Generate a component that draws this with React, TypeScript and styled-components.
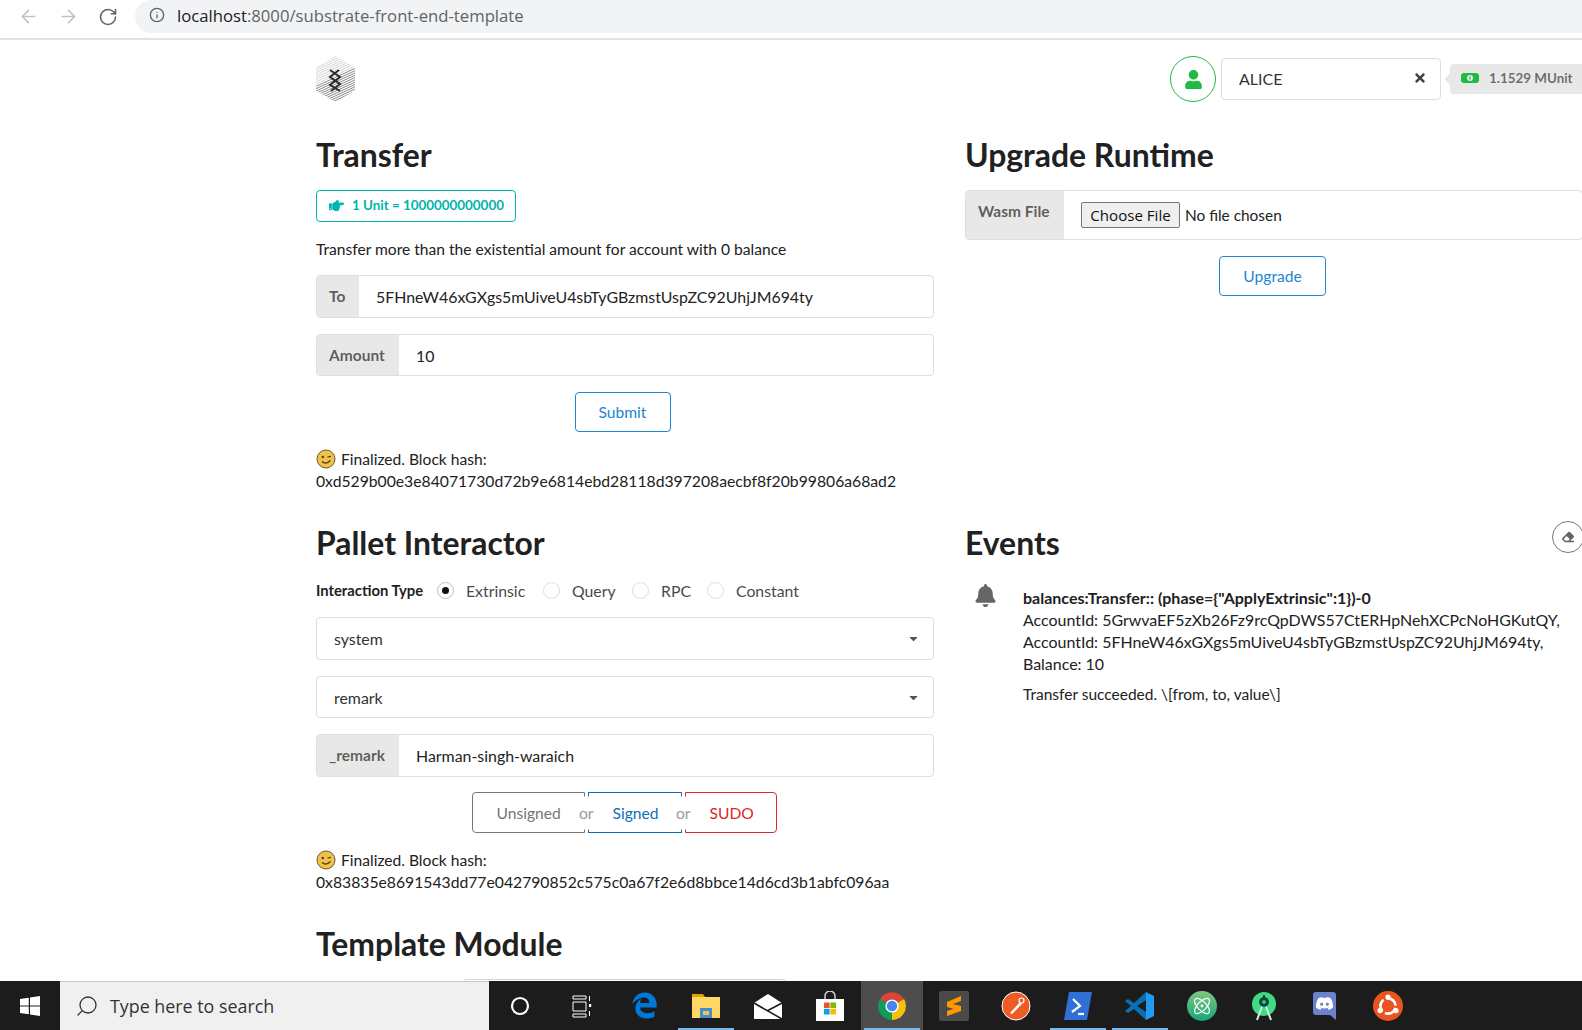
import React from "react";
import styled, { createGlobalStyle } from "styled-components";
import { ArrowLeft, ArrowRight, RotateCw, Info, Search, Atom } from "lucide-react";
import { FaBell, FaEraser, FaHandPointRight, FaTimes, FaUser, FaCaretDown } from "react-icons/fa";
import { FaEdgeLegacy } from "react-icons/fa6";
import { SiDiscord } from "react-icons/si";

const Global = createGlobalStyle`
  html, body { margin: 0; padding: 0; background: #fff; }
  body { font-family: Lato, "Liberation Sans", sans-serif; color: #212121; }
  * { box-sizing: border-box; }
`;

const Screen = styled.div`
  width: 1582px; height: 1030px; display: flex; flex-direction: column; overflow: hidden;
`;
const BrowserBar = styled.div`
  height: 40px; flex: none; display: flex; align-items: flex-start; border-bottom: 2px solid #dfe1e5;
  padding-left: 17px;
`;
const NavButton = styled.div<{ $dim?: boolean }>`
  width: 40px; height: 33px; display: flex; align-items: center; padding-left: 1px;
  color: ${(p) => (p.$dim ? "#bdc1c6" : "#5f6368")};
`;
const UrlPill = styled.div`
  flex: 1; height: 33px; margin-left: -2px; background: #f1f3f4; border-radius: 17px 0 0 17px;
  display: flex; align-items: center; padding: 0 0 3px 14px; gap: 12px; color: #5f6368;
  font: 400 16.7px "Open Sans", sans-serif;
`;
const UrlHost = styled.span` color: #202124; `;

const Page = styled.main`
  flex: 1; min-height: 0; overflow: hidden; padding: 16px 0 0 316px; position: relative;
`;
const Header = styled.header`
  width: 1280px; height: 46px; display: flex; align-items: flex-start; margin-bottom: 32px;
`;
const Logo = styled.svg` width: 39px; height: 46px; flex: none; `;
const AccountArea = styled.div`
  margin-left: 815px; display: flex; align-items: flex-start;
`;
const Avatar = styled.div`
  width: 46px; height: 46px; border: 1.5px solid #21ba45; border-radius: 50%; color: #21ba45;
  display: flex; align-items: center; justify-content: center; font-size: 19px; flex: none;
`;
const AccountSelect = styled.div`
  width: 220px; height: 42px; margin: 2px 0 0 5px; border: 1px solid #dedede; border-radius: 4px;
  display: flex; align-items: center; justify-content: space-between; padding: 0 13px 2px 17px;
  font-size: 16px; color: #333; flex: none;
`;
const BalanceTag = styled.div`
  position: relative; width: 140px; height: 30px; margin: 8px 0 0 9px; background: #e8e8e8;
  border-radius: 4px; display: flex; align-items: center; padding: 0 0 3px 11px; gap: 10px;
  font-size: 13.4px; font-weight: 700; color: rgba(0,0,0,.55); flex: none;
  &::before {
    content: ""; position: absolute; left: -4px; top: 11px; width: 8px; height: 8px;
    background: #e8e8e8; transform: rotate(45deg);
  }
`;

const Row = styled.div<{ $after: number }>`
  width: 1267px; display: grid; grid-template-columns: 618px 618px; column-gap: 31px;
  margin-bottom: ${(p) => p.$after}px;
`;
const Column = styled.section` min-width: 0; position: relative; `;
const Title = styled.h2`
  margin: 0; height: 40px; font-size: 31.9px; line-height: 42px; font-weight: 700; color: #212121;
  white-space: nowrap;
`;
const InfoTag = styled.div`
  width: 200px; height: 32px; margin-top: 16px; border: 1px solid #00b5ad; border-radius: 4px; color: #00b5ad;
  display: flex; align-items: center; padding: 0 0 2px 12px; gap: 8px; font-size: 13.4px; font-weight: 700;
  white-space: nowrap;
`;
const Copy = styled.div`
  margin-top: 16px; height: 22px; font-size: 15.6px; line-height: 22px; white-space: nowrap;
`;
const Field = styled.div<{ $top: number; $h: number }>`
  display: flex; height: ${(p) => p.$h}px; margin-top: ${(p) => p.$top}px; width: 618px;
  border: 1px solid #dedede; border-radius: 4px; overflow: hidden;
`;
const FieldLabel = styled.div<{ $w: number }>`
  width: ${(p) => p.$w}px; flex: none; margin: -1px 0 -1px -1px; background: #e8e8e8; color: rgba(0,0,0,.62);
  font-weight: 700; padding: 10px 0 0 13px; font-size: 15.5px; line-height: 22px;
`;
const FieldValue = styled.div`
  flex: 1; padding-left: 17px; display: flex; align-items: center; white-space: nowrap; color: #222; font-size: 15.9px;
`;
const FileInput = styled.input`
  margin: 0 0 0 17px; align-self: center; font: 400 15.4px Lato, sans-serif; color: #222;
  &::file-selector-button {
    width: 99px; height: 26px; padding: 0; margin-right: 5px; font: 400 15.1px "Open Sans", sans-serif; color: #111;
    background: #efefef; border: 1px solid #767676; border-radius: 2px;
  }
`;
const Centered = styled.div<{ $top: number; $shift?: number }>`
  display: flex; justify-content: center; margin-top: ${(p) => p.$top}px;
  padding-right: ${(p) => p.$shift ?? 0}px;
`;
const BlueButton = styled.button<{ $w: number }>`
  width: ${(p) => p.$w}px; height: 40px; background: #fff; border: 1px solid #2185d0; border-radius: 4px;
  color: #2185d0; font: 400 15.6px Lato, sans-serif;
`;
const Status = styled.div`
  margin-top: 16px; font-size: 15.72px; line-height: 22px; white-space: nowrap;
`;
const StatusLine = styled.div` display: flex; align-items: center; gap: 5px; font-size: 15.6px; `;
const Wink = styled.svg` width: 20px; height: 20px; flex: none; `;

const TypeRow = styled.div`
  margin-top: 17px; height: 22px; display: flex; align-items: center; font-size: 15.8px; white-space: nowrap;
`;
const TypeLabel = styled.span` font-weight: 700; font-size: 14.8px; width: 121px; flex: none; `;
const RadioOption = styled.label<{ $w: number }>`
  width: ${(p) => p.$w}px; display: flex; align-items: center; gap: 12px; color: #4a4a4a; flex: none;
`;
const RadioDot = styled.span<{ $on?: boolean }>`
  width: 17px; height: 17px; border-radius: 50%; border: 1px solid ${(p) => (p.$on ? "#c0c0c0" : "#dedede")};
  display: flex; align-items: center; justify-content: center; flex: none;
  &::after {
    content: ""; width: 7px; height: 7px; border-radius: 50%;
    background: ${(p) => (p.$on ? "#111" : "transparent")};
  }
`;
const Dropdown = styled.div<{ $top: number; $h: number }>`
  width: 618px; height: ${(p) => p.$h}px; margin-top: ${(p) => p.$top}px; border: 1px solid #dedede; border-radius: 4px;
  display: flex; align-items: center; justify-content: space-between; padding: 0 13px 0 17px; font-size: 15.9px; color: #333;
`;
const SendButtons = styled.div`
  display: flex; align-items: stretch; justify-content: center; height: 41px; margin-top: 15px; width: 616px; gap: 3px;
`;
const SendButton = styled.div<{ $c: string; $w: number; $side: "l" | "m" | "r" }>`
  width: ${(p) => p.$w}px; border: 1px solid ${(p) => p.$c}; color: ${(p) => p.$c}; position: relative;
  border-radius: ${(p) => (p.$side === "l" ? "4px 0 0 4px" : p.$side === "r" ? "0 4px 4px 0" : "0")};
  display: flex; align-items: center; font-size: 15.6px; padding-left: 24px;
`;
const OrText = styled.span`
  position: absolute; right: -13px; top: 50%; transform: translateY(-50%); background: #fff; z-index: 1;
  color: #9a9a9a; font-size: 15.6px; padding: 0 3px; line-height: 33px;
`;

const Eraser = styled.div`
  position: absolute; right: -1px; top: -1px; width: 32px; height: 32px; border: 1px solid #767676; border-radius: 50%;
  display: flex; align-items: center; justify-content: center; color: #666; font-size: 12px;
`;
const EventRow = styled.div` display: flex; margin-top: 21px; `;
const BellSlot = styled.div`
  width: 58px; flex: none; padding: 1px 0 0 9px; color: #666; font-size: 23px; line-height: 1;
`;
const EventBody = styled.div`
  font-size: 15.95px; line-height: 22px; white-space: nowrap; padding-top: 4px;
`;
const EventHead = styled.div` font-weight: 700; font-size: 16px; `;
const EventNote = styled.div` margin-top: 8px; font-size: 15.5px; `;
const PartialCard = styled.div`
  margin: 16px 0 0 147px; width: 324px; height: 20px; border-top: 1px solid #d4d4d5; border-radius: 4px 4px 0 0;
`;

const Taskbar = styled.footer`
  height: 49px; flex: none; display: flex; background: #1c1c1c; position: relative;
`;
const StartButton = styled.div`
  width: 60px; flex: none; display: flex; align-items: center; justify-content: center;
`;
const SearchBox = styled.div`
  width: 429px; flex: none; background: #f0f0f0; border-top: 1px solid #c9c9c9; display: flex; align-items: center;
  gap: 11px; padding-left: 15px; color: #333; font: 400 17.85px "Open Sans", sans-serif;
`;
const Lens = styled(Search)` transform: scaleX(-1); `;
const TaskIcons = styled.div` display: flex; `;
const TaskItem = styled.div<{ $active?: boolean; $bar?: boolean }>`
  width: 62px; height: 49px; flex: none; display: flex; align-items: center; justify-content: center; position: relative;
  background: ${(p) => (p.$active ? "#4d4d4d" : "transparent")};
  &::after {
    content: ""; position: absolute; left: 5%; right: 5%; bottom: 0; height: 2px;
    background: ${(p) => (p.$bar ? "#76b9ed" : "transparent")};
  }
`;

const LogoMark = () => {
  const lines = [];
  for (let i = -6; i < 30; i++) {
    const y = i * 2.3;
    lines.push(<line key={i} x1="0" y1={y + 12} x2="39" y2={y - 6} stroke={i < 8 ? "#cfcfcf" : i > 20 ? "#a8a8a8" : "#7d7d7d"} strokeWidth="0.9" />);
  }
  return (
    <Logo viewBox="0 0 39 46">
      <defs>
        <clipPath id="hex"><polygon points="19.5,0 39,11.5 39,34.5 19.5,46 0,34.5 0,11.5" /></clipPath>
      </defs>
      <g clipPath="url(#hex)">{lines}</g>
      <path d="M14 14 L24 21 L14 29 L24 35 M23 14 L14 21 L24 28 L15 35" fill="none" stroke="#2b2b2b" strokeWidth="2" />
    </Logo>
  );
};

const MoneyIcon = () => (
  <svg width="18" height="10" viewBox="0 0 18 10">
    <rect width="18" height="10" fill="#21ba45" />
    <circle cx="9" cy="5" r="3" fill="#e8e8e8" />
    <rect x="8.4" y="3.4" width="1.2" height="3.2" fill="#21ba45" />
    <path d="M0 0h1.6a1.6 1.6 0 0 1-1.6 1.6zM18 0h-1.6a1.6 1.6 0 0 0 1.6 1.6zM0 10h1.6a1.6 1.6 0 0 0-1.6-1.6zM18 10h-1.6a1.6 1.6 0 0 1 1.6-1.6z" fill="#e8e8e8" />
  </svg>
);

const WinkFace = () => (
  <Wink viewBox="0 0 20 20">
    <circle cx="10" cy="10" r="9" fill="#f3c14b" stroke="#6b5a2a" strokeWidth="1" />
    <circle cx="6.8" cy="8" r="1.2" fill="#4a3a1a" />
    <path d="M11.5 8 L15 7.4" stroke="#4a3a1a" strokeWidth="1.2" fill="none" />
    <path d="M6 12.5 Q10 16 14.5 11.5" stroke="#4a3a1a" strokeWidth="1.2" fill="none" />
  </Wink>
);

const TaskSvg = ({ children, box = 30 }: { children: React.ReactNode; box?: number }) => (
  <svg width={box} height={box} viewBox="0 0 30 30">{children}</svg>
);

const taskIcons: { k: string; bar?: boolean; active?: boolean; icon: React.ReactNode }[] = [
  { k: "cortana", icon: <TaskSvg><circle cx="15" cy="15" r="8" fill="none" stroke="#fff" strokeWidth="2.2" /></TaskSvg> },
  { k: "view", icon: (
    <TaskSvg>
      <path d="M6 5h13M6 8h13M6 11h13v9H6zM6 23h13M6 26h13" fill="none" stroke="#fff" strokeWidth="1" />
      <path d="M6 5v3M19 5v3M6 23v3M19 23v3" stroke="#fff" strokeWidth="1" />
      <rect x="22" y="13" width="2.2" height="3" fill="#fff" />
      <rect x="22" y="5" width="1" height="5" fill="#fff" /><rect x="22" y="20" width="1" height="5" fill="#fff" />
    </TaskSvg>
  ) },
  { k: "edge", icon: <FaEdgeLegacy size={27} color="#0078d7" /> },
  { k: "explorer", bar: true, icon: (
    <TaskSvg>
      <path d="M1 3h11l2 3H1z" fill="#e5a100" />
      <rect x="1" y="6" width="28" height="21" fill="#ffd764" />
      <rect x="9" y="17" width="12" height="10" fill="#3f8fd2" />
      <rect x="12" y="20" width="6" height="4" fill="#f5c242" />
    </TaskSvg>
  ) },
  { k: "mail", icon: (
    <TaskSvg>
      <path d="M15 3 L29 12 V28 H1 V12 Z" fill="#fff" />
      <path d="M1 12 L29 28 M29 12 L14 20" stroke="#1c1c1c" strokeWidth="1.6" fill="none" />
    </TaskSvg>
  ) },
  { k: "store", icon: (
    <TaskSvg>
      <path d="M10 8 V5 a5 5 0 0 1 10 0 V8" fill="none" stroke="#ddd" strokeWidth="1.4" />
      <rect x="1" y="8" width="28" height="22" fill="#fff" />
      <rect x="9" y="11.5" width="5.6" height="5.6" fill="#f25022" /><rect x="15.4" y="11.5" width="5.6" height="5.6" fill="#7fba00" />
      <rect x="9" y="17.9" width="5.6" height="5.6" fill="#00a4ef" /><rect x="15.4" y="17.9" width="5.6" height="5.6" fill="#ffb900" />
    </TaskSvg>
  ) },
  { k: "chrome", active: true, bar: true, icon: (
    <TaskSvg>
      <path d="M15 15 L3 8 A14 14 0 0 1 27.1 8 Z" fill="#db4437" />
      <path d="M15 15 L27.1 8 A14 14 0 0 1 15 29 Z" fill="#f4c20d" />
      <path d="M15 15 L15 29 A14 14 0 0 1 3 8 Z" fill="#0f9d58" />
      <circle cx="15" cy="15" r="6.6" fill="#fff" /><circle cx="15" cy="15" r="5.2" fill="#4285f4" />
    </TaskSvg>
  ) },
  { k: "sublime", icon: (
    <TaskSvg>
      <rect x="0" y="0" width="30" height="30" rx="2" fill="#4a4a4a" />
      <path d="M22 5 L8 11 V16 L22 20 V15 L14 13 L22 10 Z M22 15 L8 20 V25 L22 20 Z" fill="#ff9800" />
    </TaskSvg>
  ) },
  { k: "postman", icon: (
    <TaskSvg>
      <circle cx="15" cy="15" r="14" fill="#ef5b25" stroke="#fff" strokeWidth="1" />
      <path d="M9 22 L19 11 L21 13 L11 23 Z" fill="#fff" />
      <circle cx="20.5" cy="9.5" r="2.5" fill="none" stroke="#fff" strokeWidth="1.2" />
    </TaskSvg>
  ) },
  { k: "powershell", bar: true, icon: (
    <TaskSvg>
      <path d="M6 1 H29 L24 29 H1 Z" fill="#2f6fd6" />
      <path d="M10 8 L17 15 L9 21" fill="none" stroke="#fff" strokeWidth="2.2" />
      <path d="M15 23 H21" stroke="#fff" strokeWidth="2.2" />
    </TaskSvg>
  ) },
  { k: "vscode", bar: true, icon: (
    <TaskSvg>
      <path d="M21 1 L9 12 L3 8 L0 10 L6 15 L0 20 L3 22 L9 18 L21 29 Z M21 9 V21 L12 15 Z" fill="#0a70b5" fillRule="evenodd" />
      <path d="M21 1 L29 5 V25 L21 29 Z" fill="#1f9cf0" />
    </TaskSvg>
  ) },
  { k: "atom", icon: (
    <svg width="30" height="30" viewBox="0 0 30 30">
      <defs><linearGradient id="at" x1="0" y1="0" x2="0" y2="1"><stop offset="0" stopColor="#7fc77f" /><stop offset="1" stopColor="#18a67a" /></linearGradient></defs>
      <circle cx="15" cy="15" r="15" fill="url(#at)" />
      <g transform="translate(5 5)"><Atom size={20} color="#fff" strokeWidth={1.5} /></g>
    </svg>
  ) },
  { k: "android", icon: (
    <TaskSvg>
      <circle cx="15" cy="13" r="12" fill="#3ddc84" />
      <path d="M14 13 L8 29 M16 13 L22 29" stroke="#d8efe3" strokeWidth="2" />
      <circle cx="15" cy="11" r="5" fill="#0f4a3a" />
      <rect x="14" y="4" width="2" height="5" fill="#0f4a3a" />
      <circle cx="15" cy="11" r="1.8" fill="#3ddc84" />
    </TaskSvg>
  ) },
  { k: "discord", icon: (
    <svg width="30" height="30" viewBox="0 0 30 30">
      <path d="M5 1 H22 a3 3 0 0 1 3 3 V29 L19 24 H5 a3 3 0 0 1-3-3 V4 a3 3 0 0 1 3-3 Z" fill="#6b82cf" />
      <g transform="translate(5 4)"><SiDiscord size={17} color="#fff" /></g>
    </svg>
  ) },
  { k: "ubuntu", icon: (
    <TaskSvg>
      <circle cx="15" cy="15" r="15" fill="#e95420" />
      <circle cx="15" cy="15" r="7.6" fill="none" stroke="#fff" strokeWidth="2.6" strokeDasharray="13 3" strokeDashoffset="-2" />
      <circle cx="15" cy="6" r="2.6" fill="#fff" />
      <circle cx="7" cy="19.6" r="2.6" fill="#fff" />
      <circle cx="23" cy="19.6" r="2.6" fill="#fff" />
    </TaskSvg>
  ) },
];

export default function App() {
  return (
    <Screen>
      <Global />
      <BrowserBar>
        <NavButton $dim><ArrowLeft size={21} strokeWidth={1.7} /></NavButton>
        <NavButton $dim><ArrowRight size={21} strokeWidth={1.7} /></NavButton>
        <NavButton><RotateCw size={20} strokeWidth={1.9} /></NavButton>
        <UrlPill>
          <Info size={16} strokeWidth={2} />
          <span><UrlHost>localhost</UrlHost>:8000/substrate-front-end-template</span>
        </UrlPill>
      </BrowserBar>

      <Page>
        <Header>
          <LogoMark />
          <AccountArea>
            <Avatar><FaUser /></Avatar>
            <AccountSelect>ALICE<FaTimes size={14} color="#444" /></AccountSelect>
            <BalanceTag><MoneyIcon />1.1529 MUnit</BalanceTag>
          </AccountArea>
        </Header>

        <Row $after={30}>
          <Column>
            <Title>Transfer</Title>
            <InfoTag><FaHandPointRight size={15} />1 Unit = 1000000000000</InfoTag>
            <Copy>Transfer more than the existential amount for account with 0 balance</Copy>
            <Field $top={15} $h={43}>
              <FieldLabel $w={43}>To</FieldLabel>
              <FieldValue>5FHneW46xGXgs5mUiveU4sbTyGBzmstUspZC92UhjJM694ty</FieldValue>
            </Field>
            <Field $top={16} $h={42}>
              <FieldLabel $w={83}>Amount</FieldLabel>
              <FieldValue>10</FieldValue>
            </Field>
            <Centered $top={16} $shift={5}><BlueButton $w={96}>Submit</BlueButton></Centered>
            <Status>
              <StatusLine><WinkFace />Finalized. Block hash:</StatusLine>
              0xd529b00e3e84071730d72b9e6814ebd28118d397208aecbf8f20b99806a68ad2
            </Status>
          </Column>
          <Column>
            <Title>Upgrade Runtime</Title>
            <Field $top={16} $h={50}>
              <FieldLabel $w={99}>Wasm File</FieldLabel>
              <FileInput type="file" />
            </Field>
            <Centered $top={16} $shift={3}><BlueButton $w={107}>Upgrade</BlueButton></Centered>
          </Column>
        </Row>

        <Row $after={30}>
          <Column>
            <Title>Pallet Interactor</Title>
            <TypeRow>
              <TypeLabel>Interaction Type</TypeLabel>
              <RadioOption $w={106}><RadioDot $on />Extrinsic</RadioOption>
              <RadioOption $w={89}><RadioDot />Query</RadioOption>
              <RadioOption $w={75}><RadioDot />RPC</RadioOption>
              <RadioOption $w={120}><RadioDot />Constant</RadioOption>
            </TypeRow>
            <Dropdown $top={16} $h={43}>system<FaCaretDown size={13} color="#555" /></Dropdown>
            <Dropdown $top={16} $h={42}>remark<FaCaretDown size={13} color="#555" /></Dropdown>
            <Field $top={16} $h={43}>
              <FieldLabel $w={83}>_remark</FieldLabel>
              <FieldValue>Harman-singh-waraich</FieldValue>
            </Field>
            <SendButtons>
              <SendButton $c="#767676" $w={113} $side="l">Unsigned<OrText>or</OrText></SendButton>
              <SendButton $c="#0e6eb8" $w={94} $side="m">Signed<OrText>or</OrText></SendButton>
              <SendButton $c="#db2828" $w={92} $side="r">SUDO</SendButton>
            </SendButtons>
            <Status>
              <StatusLine><WinkFace />Finalized. Block hash:</StatusLine>
              0x83835e8691543dd77e042790852c575c0a67f2e6d8bbce14d6cd3b1abfc096aa
            </Status>
          </Column>
          <Column>
            <Title>Events</Title>
            <Eraser><FaEraser /></Eraser>
            <EventRow>
              <BellSlot><FaBell /></BellSlot>
              <EventBody>
                <EventHead>balances:Transfer:: (phase={'{'}"ApplyExtrinsic":1{'}'})-0</EventHead>
                <div>AccountId: 5GrwvaEF5zXb26Fz9rcQpDWS57CtERHpNehXCPcNoHGKutQY,</div>
                <div>AccountId: 5FHneW46xGXgs5mUiveU4sbTyGBzmstUspZC92UhjJM694ty,</div>
                <div>Balance: 10</div>
                <EventNote>Transfer succeeded. \[from, to, value\]</EventNote>
              </EventBody>
            </EventRow>
          </Column>
        </Row>

        <Row $after={0}>
          <Column>
            <Title>Template Module</Title>
            <PartialCard />
          </Column>
        </Row>
      </Page>

      <Taskbar>
        <StartButton>
          <svg width="20" height="20" viewBox="0 0 20 20" fill="#fff">
            <path d="M0 3 L8.8 1.7 V9.4 H0 Z M10 1.5 L20 0 V9.4 H10 Z M0 10.6 H8.8 V18.3 L0 17 Z M10 10.6 H20 V20 L10 18.5 Z" />
          </svg>
        </StartButton>
        <SearchBox>
          <Lens size={24} strokeWidth={1.3} />
          Type here to search
        </SearchBox>
        <TaskIcons>
          {taskIcons.map((t) => (
            <TaskItem key={t.k} $active={t.active} $bar={t.bar}>{t.icon}</TaskItem>
          ))}
        </TaskIcons>
      </Taskbar>
    </Screen>
  );
}
